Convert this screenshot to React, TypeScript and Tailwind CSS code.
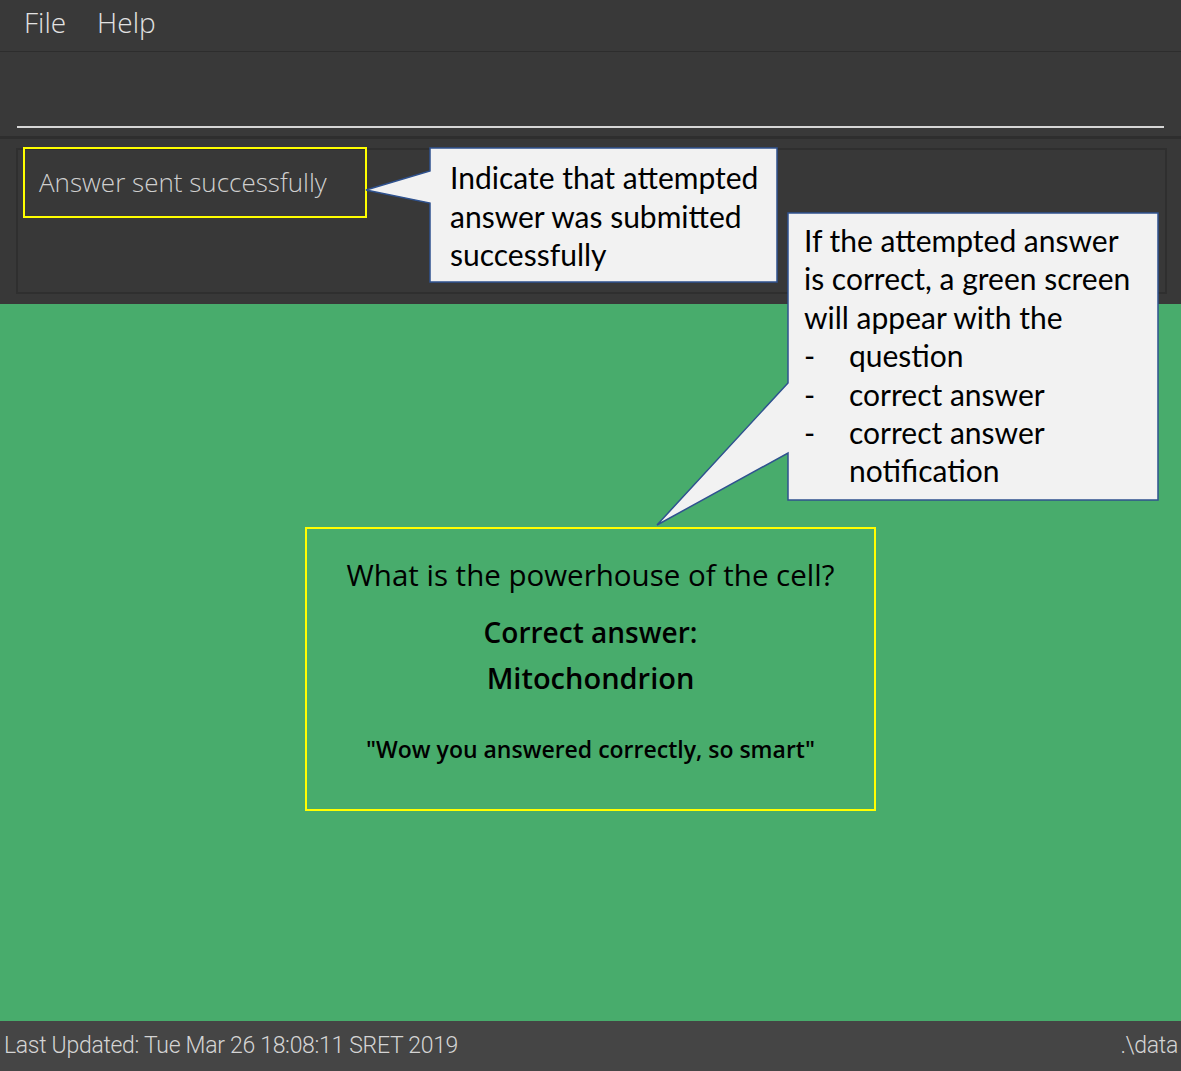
import React from "react";

const uiFont = { fontFamily: '"Open Sans", "Noto Sans", sans-serif' };
const noteFont = { fontFamily: 'Lato, "Noto Sans", sans-serif' };
const statusFont = { fontFamily: 'Roboto, "Noto Sans", sans-serif' };

function Callouts() {
  return (
    <>
      <svg
        className="pointer-events-none absolute left-0 top-0"
        width={1181}
        height={1071}
        viewBox="0 0 1181 1071"
      >
        <path
          d="M430 148 H777 V282 H430 V203 L366 190 L430 171 Z"
          fill="#f2f2f2"
          stroke="#2f528f"
          strokeWidth={1.5}
        />
        <path
          d="M788 213 H1158 V500 H788 V453 L657 525 L788 383 Z"
          fill="#f2f2f2"
          stroke="#2f528f"
          strokeWidth={1.5}
        />
      </svg>

      <div
        className="absolute left-[450px] top-[158px] text-[30px] leading-[38.5px] text-black"
        style={noteFont}
      >
        <div>Indicate that attempted</div>
        <div>answer was submitted</div>
        <div>successfully</div>
      </div>

      <div
        className="absolute left-[804px] top-[221px] text-[30px] leading-[38.4px] text-black"
        style={noteFont}
      >
        <div>If the attempted answer</div>
        <div>is correct, a green screen</div>
        <div>will appear with the</div>
        {["question", "correct answer", "correct answer"].map((t, i) => (
          <div key={i} className="flex">
            <span className="w-[45px]">-</span>
            <span>{t}</span>
          </div>
        ))}
        <div className="pl-[45px]">notification</div>
      </div>
    </>
  );
}

export default function App() {
  return (
    <div
      className="relative flex h-[1071px] w-[1181px] flex-col overflow-hidden bg-[#393939]"
      style={uiFont}
    >
      {/* menu */}
      <div className="flex h-[52px] items-center gap-[31px] border-b border-[#2d2d2d] pl-[24px] pb-[8px] text-[28px] font-light text-[#e2e2e2]">
        <span>File</span>
        <span>Help</span>
      </div>

      {/* command box */}
      <div className="flex h-[84px] items-end px-[17px] pb-[8px]">
        <div className="h-[2px] w-full bg-[#d6d6d6]" />
      </div>
      <div className="h-[3px] bg-[#2e2e2e]" />

      {/* result display */}
      <div className="h-[165px] bg-[#383838] pl-[16px] pr-[14px] pt-[9px] pb-[10px]">
        <div className="h-full border-2 border-[#2f2f2f] pl-[5px]">
          <div className="-mt-[3px] inline-flex h-[71px] w-[344px] items-center border-2 border-[#ffff00] pl-[14px] text-[26px] font-light text-[#cfcfcf]">
            Answer sent successfully
          </div>
        </div>
      </div>

      {/* green result panel */}
      <div className="flex flex-1 items-start justify-center bg-[#48ac6c] pt-[223px]">
        <div className="flex h-[284px] w-[571px] flex-col items-center border-2 border-[#ffff00] pt-[24px] text-black">
          <div className="text-[29.5px] font-normal leading-[44px]">
            What is the powerhouse of the cell?
          </div>
          <div className="mt-[13px] text-[28px] font-semibold leading-[45px]">
            Correct answer:
          </div>
          <div className="text-[29px] font-semibold leading-[45px]">
            Mitochondrion
          </div>
          <div className="mt-[33px] text-[23px] font-semibold leading-[32px]">
            "Wow you answered correctly, so smart"
          </div>
        </div>
      </div>

      {/* status bar */}
      <div
        className="flex h-[50px] items-center justify-between bg-[#454545] pl-[4px] pr-[3px] text-[23px] font-light tracking-[-0.3px] text-[#d4d4d4]"
        style={statusFont}
      >
        <span>Last Updated: Tue Mar 26 18:08:11 SRET 2019</span>
        <span>.\data</span>
      </div>

      <Callouts />
    </div>
  );
}
